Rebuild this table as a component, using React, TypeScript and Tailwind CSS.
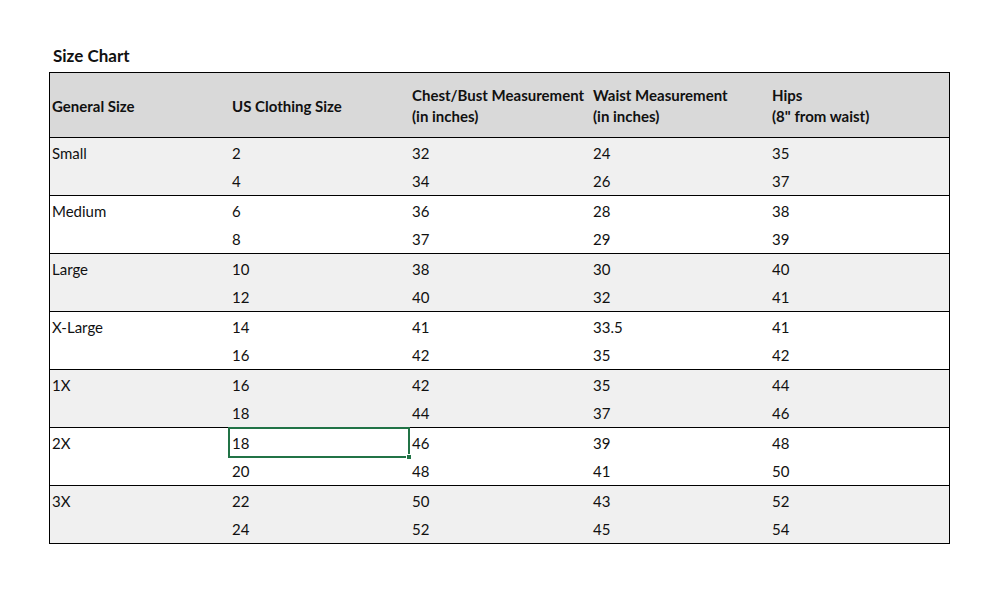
const groups = [
  { size: 'Small', rows: [['2', '32', '24', '35'], ['4', '34', '26', '37']] },
  { size: 'Medium', rows: [['6', '36', '28', '38'], ['8', '37', '29', '39']] },
  { size: 'Large', rows: [['10', '38', '30', '40'], ['12', '40', '32', '41']] },
  { size: 'X-Large', rows: [['14', '41', '33.5', '41'], ['16', '42', '35', '42']] },
  { size: '1X', rows: [['16', '42', '35', '44'], ['18', '44', '37', '46']] },
  { size: '2X', rows: [['18', '46', '39', '48'], ['20', '48', '41', '50']] },
  { size: '3X', rows: [['22', '50', '43', '52'], ['24', '52', '45', '54']] },
]

const cols = 'grid grid-cols-[180px_180px_181px_179px_1fr]'

export default function App() {
  return (
    <div className="w-[1000px] h-[606px] bg-white text-[#111] font-['Lato','Noto_Sans',sans-serif]">
      <div className="pt-[45px] pl-[53px]">
        <h1 className="h-[22px] leading-[22px] text-[17px] font-bold">Size Chart</h1>
      </div>
      <div className="ml-[49px] mt-[5px] w-[901px] border border-black">
        <div className={`${cols} h-[65px] pt-[2px] bg-[#d9d9d9] border-b border-black items-center font-bold text-[15px] leading-[21px]`}>
          <div className="pl-[2px]">General Size</div>
          <div className="pl-[2px]">US Clothing Size</div>
          <div className="pl-[2px] whitespace-nowrap">Chest/Bust Measurement<br />(in inches)</div>
          <div className="pl-[2px]">Waist Measurement<br />(in inches)</div>
          <div className="pl-[2px]">Hips<br />(8" from waist)</div>
        </div>
        {groups.map((g, gi) => (
          <div
            key={g.size}
            className={`${gi > 0 ? 'border-t border-black' : ''} ${gi % 2 === 0 ? 'bg-[#f0f0f0]' : 'bg-white'} text-[15px]`}
          >
            {g.rows.map((r, ri) => (
              <div key={ri} className={`${cols} pt-[1px] ${ri === 0 ? 'h-[29px] leading-[28px]' : 'h-[28px] leading-[27px]'}`}>
                <div className="pl-[2px]">{ri === 0 ? g.size : ''}</div>
                <div className="pl-[2px] relative">
                  {r[0]}
                  {g.size === '2X' && ri === 0 && (
                    <div className="absolute -left-[2px] -top-[2px] w-[182px] h-[31px] border-2 border-[#217346]">
                      <div className="absolute -right-[4px] -bottom-[4px] w-[6px] h-[6px] bg-[#217346] border border-white" />
                    </div>
                  )}
                </div>
                <div className="pl-[2px]">{r[1]}</div>
                <div className="pl-[2px]">{r[2]}</div>
                <div className="pl-[2px]">{r[3]}</div>
              </div>
            ))}
          </div>
        ))}
      </div>
    </div>
  )
}
